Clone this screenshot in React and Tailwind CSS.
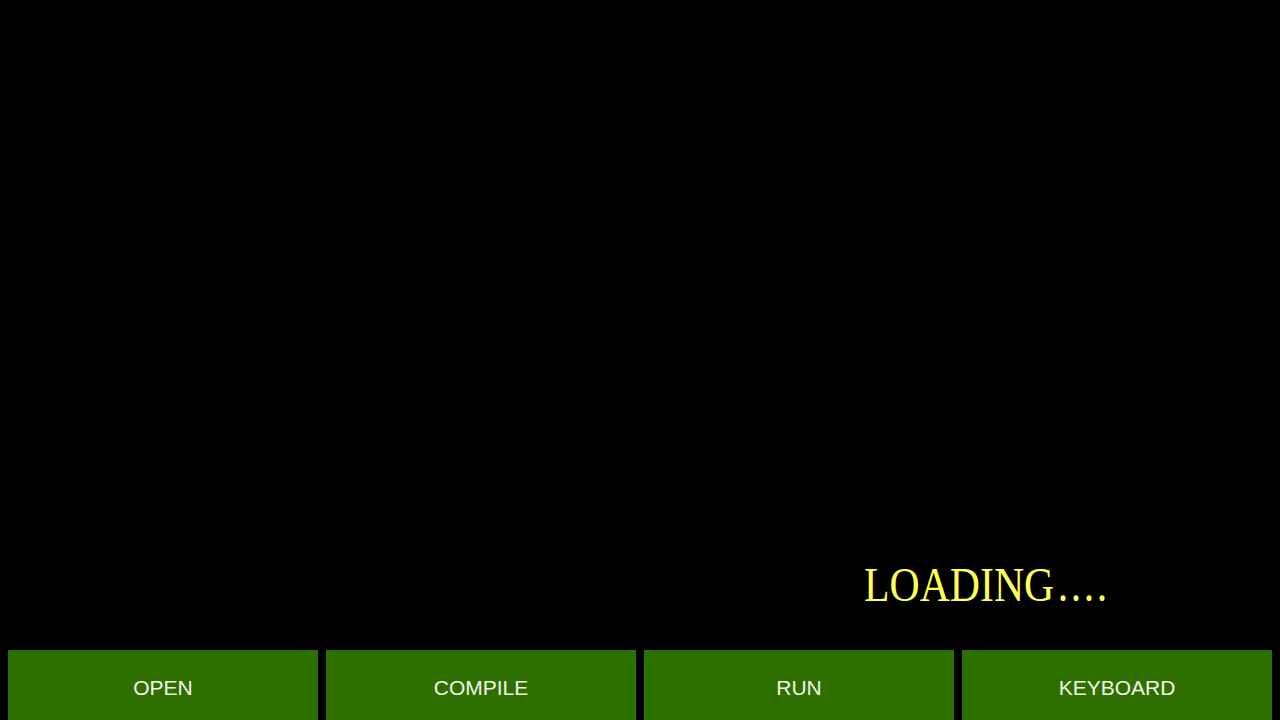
export default function App() {
  const btns = ["OPEN", "COMPILE", "RUN", "KEYBOARD"];
  return (
    <div className="w-[1280px] h-[720px] bg-black flex flex-col overflow-hidden">
      <div className="h-[650px] flex flex-col justify-end">
        <div className="pl-[864px] pb-[41px]">
          <div
            className="text-[48px] leading-[48px] text-[#ffff55] origin-left scale-x-87 whitespace-nowrap"
            style={{ fontFamily: '"Liberation Serif", serif' }}
          >
            LOADING<span className="tracking-[3px] pl-[4px]">....</span>
          </div>
        </div>
      </div>
      <div className="flex gap-2 px-2 h-[70px]">
        {btns.map((b) => (
          <div
            key={b}
            className="flex-1 bg-[#2e7000] flex items-center justify-center text-[#f4f4ec] text-[21px] pt-[5px]"
            style={{ fontFamily: '"Liberation Sans", sans-serif' }}
          >
            {b}
          </div>
        ))}
      </div>
    </div>
  );
}
